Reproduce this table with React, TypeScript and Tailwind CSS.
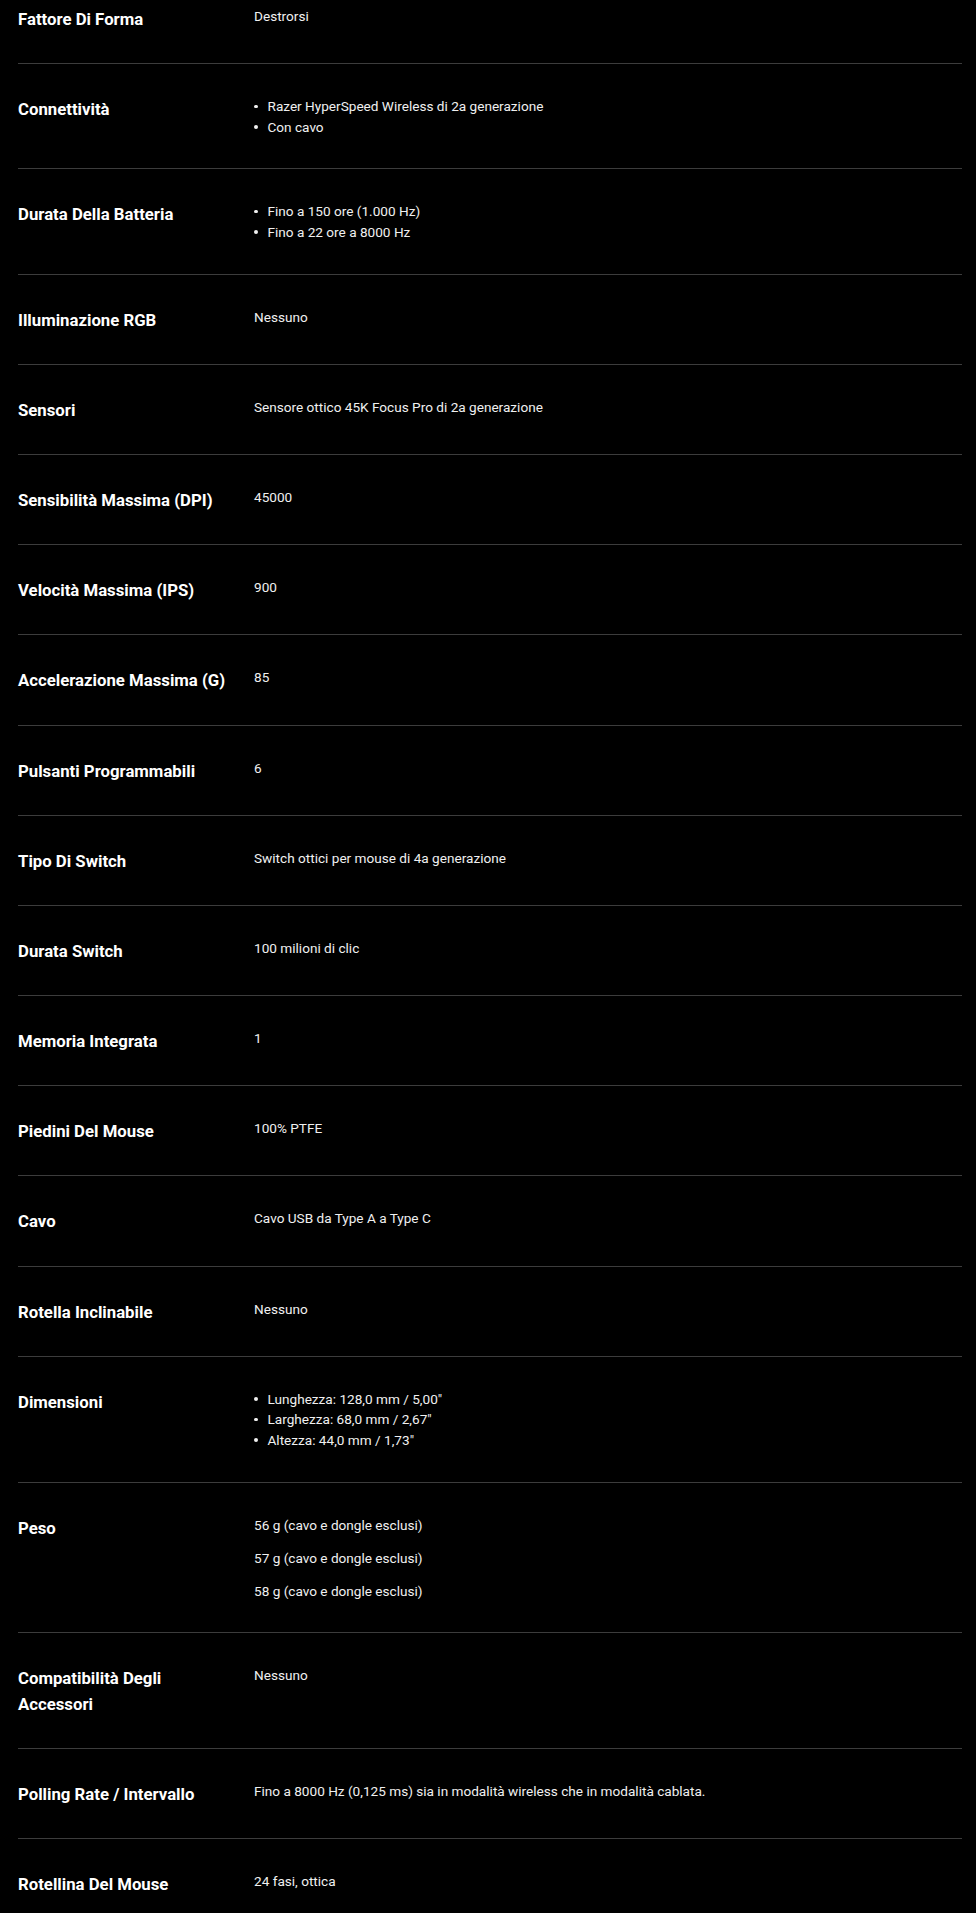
type Spec = {
  label: string
  value?: string
  list?: string[]
  paras?: string[]
}

const specs: Spec[] = [
  { label: "Fattore Di Forma", value: "Destrorsi" },
  {
    label: "Connettività",
    list: ["Razer HyperSpeed Wireless di 2a generazione", "Con cavo"],
  },
  {
    label: "Durata Della Batteria",
    list: ["Fino a 150 ore (1.000 Hz)", "Fino a 22 ore a 8000 Hz"],
  },
  { label: "Illuminazione RGB", value: "Nessuno" },
  { label: "Sensori", value: "Sensore ottico 45K Focus Pro di 2a generazione" },
  { label: "Sensibilità Massima (DPI)", value: "45000" },
  { label: "Velocità Massima (IPS)", value: "900" },
  { label: "Accelerazione Massima (G)", value: "85" },
  { label: "Pulsanti Programmabili", value: "6" },
  { label: "Tipo Di Switch", value: "Switch ottici per mouse di 4a generazione" },
  { label: "Durata Switch", value: "100 milioni di clic" },
  { label: "Memoria Integrata", value: "1" },
  { label: "Piedini Del Mouse", value: "100% PTFE" },
  { label: "Cavo", value: "Cavo USB da Type A a Type C" },
  { label: "Rotella Inclinabile", value: "Nessuno" },
  {
    label: "Dimensioni",
    list: [
      "Lunghezza: 128,0 mm / 5,00\"",
      "Larghezza: 68,0 mm / 2,67\"",
      "Altezza: 44,0 mm / 1,73\"",
    ],
  },
  {
    label: "Peso",
    paras: [
      "56 g (cavo e dongle esclusi)",
      "57 g (cavo e dongle esclusi)",
      "58 g (cavo e dongle esclusi)",
    ],
  },
  { label: "Compatibilità Degli Accessori", value: "Nessuno" },
  {
    label: "Polling Rate / Intervallo",
    value: "Fino a 8000 Hz (0,125 ms) sia in modalità wireless che in modalità cablata.",
  },
  { label: "Rotellina Del Mouse", value: "24 fasi, ottica" },
]

function Row({ spec, first }: { spec: Spec; first: boolean }) {
  return (
    <div
      className={
        "grid grid-cols-[25%_75%] border-[#3c3c3c] pb-[31.2px] " +
        (first ? "pt-[6px]" : "border-t pt-[32px]")
      }
    >
      <p className="pr-6 text-[16.75px] leading-[26px] font-bold text-white">
        {spec.label}
      </p>
      <div className="text-[13.6px] leading-[20px] text-[#f0f0f0]">
        {spec.value && <p>{spec.value}</p>}
        {spec.list && (
          <ul>
            {spec.list.map((item) => (
              <li key={item} className="flex items-center leading-[20.5px]">
                <span className="mr-[10px] h-[3.5px] w-[3.5px] rounded-full bg-[#f0f0f0]" />
                <span>{item}</span>
              </li>
            ))}
          </ul>
        )}
        {spec.paras && (
          <div className="flex flex-col gap-[13px]">
            {spec.paras.map((p, i) => (
              <p key={i}>{p}</p>
            ))}
          </div>
        )}
      </div>
    </div>
  )
}

export default function App() {
  return (
    <div
      className="min-h-[1913px] bg-black pl-[18px] pr-[14px]"
      style={{ fontFamily: "Roboto, 'Liberation Sans', sans-serif" }}
    >
      {specs.map((s, i) => (
        <Row key={s.label} spec={s} first={i === 0} />
      ))}
    </div>
  )
}
